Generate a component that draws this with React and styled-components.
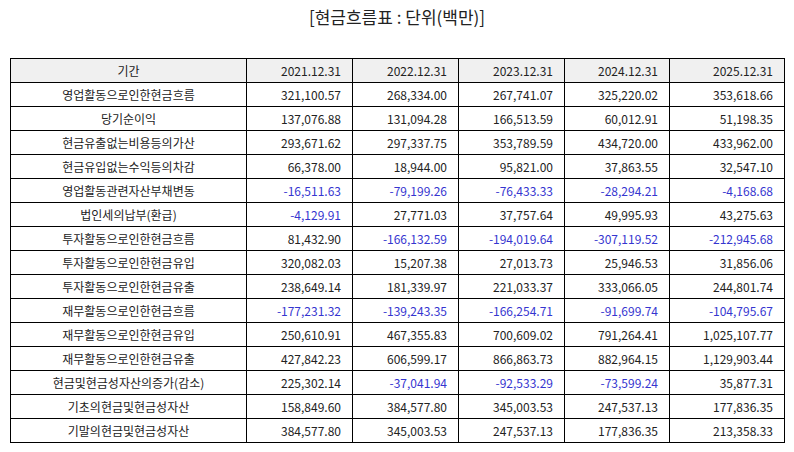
import React from "react";
import styled, { createGlobalStyle } from "styled-components";

const Global = createGlobalStyle`
  html, body { margin: 0; padding: 0; background: #fff; }
  body { font-family: "Noto Sans CJK KR", "Noto Sans", sans-serif; }
`;

const Page = styled.div`
  width: 794px;
  height: 452px;
  padding: 0 10px;
  box-sizing: border-box;
  display: flex;
  flex-direction: column;
`;

const Title = styled.h1`
  margin: 0;
  height: 58px;
  padding-top: 5px;
  box-sizing: border-box;
  font-size: 17px;
  font-weight: 400;
  line-height: 24px;
  color: #222;
  text-align: center;
`;

const Table = styled.table`
  border-collapse: separate;
  border-spacing: 0;
  table-layout: fixed;
  width: 775px;
  border-left: 1px solid #000;
  border-top: 1px solid #000;
  font-size: 12px;
  color: #222;
`;

const Row = styled.tr`
  height: 24px;
`;

const Cell = styled.td`
  border-right: 1px solid #000;
  border-bottom: 1px solid #000;
  padding: ${(p) => (p.$label ? "0" : "0 11px 0 4px")};
  height: 24px;
  box-sizing: border-box;
  font-weight: 400;
  line-height: 22px;
  text-align: ${(p) => (p.$label ? "center" : "right")};
  color: ${(p) => (p.$neg ? "#3535d0" : "#222")};
  background: ${(p) => (p.$head ? "#f0f0f0" : "#fff")};
  white-space: nowrap;
`;

const widths = [236, 106, 106, 106, 105, 115];

const years = ["2021.12.31", "2022.12.31", "2023.12.31", "2024.12.31", "2025.12.31"];

const rows = [
  ["영업활동으로인한현금흐름", "321,100.57", "268,334.00", "267,741.07", "325,220.02", "353,618.66"],
  ["당기순이익", "137,076.88", "131,094.28", "166,513.59", "60,012.91", "51,198.35"],
  ["현금유출없는비용등의가산", "293,671.62", "297,337.75", "353,789.59", "434,720.00", "433,962.00"],
  ["현금유입없는수익등의차감", "66,378.00", "18,944.00", "95,821.00", "37,863.55", "32,547.10"],
  ["영업활동관련자산부채변동", "-16,511.63", "-79,199.26", "-76,433.33", "-28,294.21", "-4,168.68"],
  ["법인세의납부(환급)", "-4,129.91", "27,771.03", "37,757.64", "49,995.93", "43,275.63"],
  ["투자활동으로인한현금흐름", "81,432.90", "-166,132.59", "-194,019.64", "-307,119.52", "-212,945.68"],
  ["투자활동으로인한현금유입", "320,082.03", "15,207.38", "27,013.73", "25,946.53", "31,856.06"],
  ["투자활동으로인한현금유출", "238,649.14", "181,339.97", "221,033.37", "333,066.05", "244,801.74"],
  ["재무활동으로인한현금흐름", "-177,231.32", "-139,243.35", "-166,254.71", "-91,699.74", "-104,795.67"],
  ["재무활동으로인한현금유입", "250,610.91", "467,355.83", "700,609.02", "791,264.41", "1,025,107.77"],
  ["재무활동으로인한현금유출", "427,842.23", "606,599.17", "866,863.73", "882,964.15", "1,129,903.44"],
  ["현금및현금성자산의증가(감소)", "225,302.14", "-37,041.94", "-92,533.29", "-73,599.24", "35,877.31"],
  ["기초의현금및현금성자산", "158,849.60", "384,577.80", "345,003.53", "247,537.13", "177,836.35"],
  ["기말의현금및현금성자산", "384,577.80", "345,003.53", "247,537.13", "177,836.35", "213,358.33"],
];

export default function App() {
  return (
    <>
      <Global />
      <Page>
        <Title>[현금흐름표 : 단위(백만)]</Title>
        <Table>
          <colgroup>
            {widths.map((w, i) => (
              <col key={i} style={{ width: w }} />
            ))}
          </colgroup>
          <thead>
            <Row>
              <Cell as="th" $head $label>
                기간
              </Cell>
              {years.map((y) => (
                <Cell as="th" $head key={y}>
                  {y}
                </Cell>
              ))}
            </Row>
          </thead>
          <tbody>
            {rows.map((r) => (
              <Row key={r[0]}>
                <Cell $label>{r[0]}</Cell>
                {r.slice(1).map((v, i) => (
                  <Cell key={i} $neg={v.startsWith("-")}>
                    {v}
                  </Cell>
                ))}
              </Row>
            ))}
          </tbody>
        </Table>
      </Page>
    </>
  );
}
